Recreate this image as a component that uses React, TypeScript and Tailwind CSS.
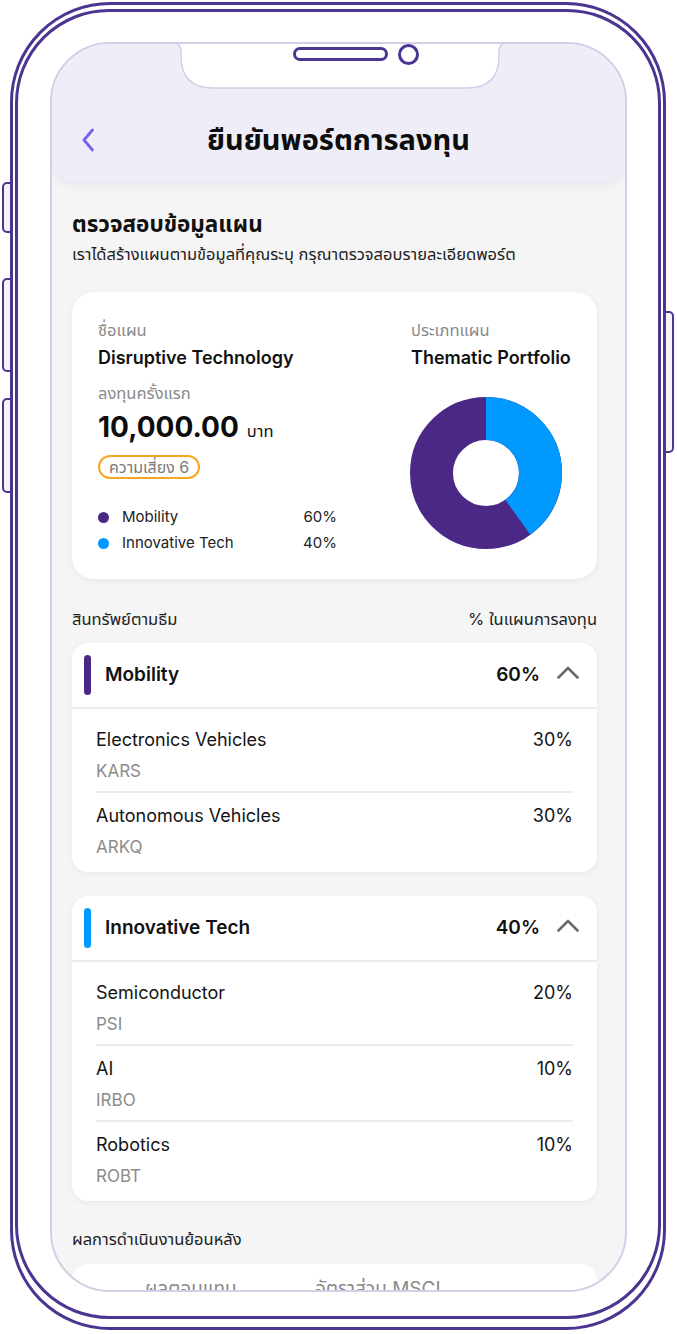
import React from "react";

const PURPLE = "#4b2886";

function Chevron() {
  return (
    <svg width="22" height="13" viewBox="0 0 22 13" fill="none">
      <polyline points="1.5,11.5 11,2 20.5,11.5" stroke="#6b6b6b" strokeWidth="2.6" strokeLinecap="round" strokeLinejoin="round" />
    </svg>
  );
}

function Item({ name, code, pct, last }: { name: string; code: string; pct: string; last?: boolean }) {
  return (
    <div className="px-[24px]">
      <div className={last ? "pt-[11px] pb-[8px]" : "pt-[11px] pb-[8px] border-b-2 border-[#ececec]"}>
        <div className="flex justify-between text-[18px] leading-[24px] text-[#141414]">
          <span>{name}</span>
          <span>{pct}</span>
        </div>
        <div className="mt-[7px] text-[17px] leading-[24px] text-[#8c8c8c]">{code}</div>
      </div>
    </div>
  );
}

function ThemeCard({
  title,
  pct,
  barClass,
  items,
}: {
  title: string;
  pct: string;
  barClass: string;
  items: { name: string; code: string; pct: string }[];
}) {
  return (
    <div className="bg-white rounded-[16px] shadow-[0_2px_6px_rgba(0,0,0,0.05)]">
      <div className="h-[66px] flex items-center pl-[12px] pr-[18px] border-b-2 border-[#ececec]">
        <div className={barClass} />
        <div className="ml-[14px] flex-1 text-[19px] font-semibold text-[#111]">{title}</div>
        <div className="text-[19px] font-semibold text-[#111]">{pct}</div>
        <div className="ml-[17px] -mt-[6px]">
          <Chevron />
        </div>
      </div>
      <div className="pt-[8px] pb-[5px]">
        {items.map((it, i) => (
          <Item key={it.code} {...it} last={i === items.length - 1} />
        ))}
      </div>
    </div>
  );
}

function Donut() {
  const r = 54.5;
  const c = 2 * Math.PI * r;
  return (
    <svg width="152" height="152" viewBox="0 0 152 152">
      <circle cx="76" cy="76" r={r} fill="none" stroke={PURPLE} strokeWidth="43" />
      <circle
        cx="76"
        cy="76"
        r={r}
        fill="none"
        stroke="#0099ff"
        strokeWidth="43"
        strokeDasharray={`${c * 0.4} ${c}`}
        transform="rotate(-90 76 76)"
      />
    </svg>
  );
}

export default function App() {
  return (
    <div className="w-[677px] h-[1334px] bg-white relative overflow-hidden font-[Inter,'Noto_Sans_Thai','Noto_Sans',sans-serif]">
      {/* side buttons */}
      <div className="absolute left-[2px] top-[182px] w-[10px] h-[51px] border-2 border-[#4c3491] rounded-l-[5px] bg-[#f6f4fb]" />
      <div className="absolute left-[2px] top-[278px] w-[10px] h-[94px] border-2 border-[#4c3491] rounded-l-[5px] bg-[#f6f4fb]" />
      <div className="absolute left-[2px] top-[398px] w-[10px] h-[95px] border-2 border-[#4c3491] rounded-l-[5px] bg-[#f6f4fb]" />
      <div className="absolute left-[664px] top-[311px] w-[10px] h-[142px] border-2 border-[#4c3491] rounded-r-[5px] bg-[#f6f4fb]" />

      <div className="pt-[2px] pl-[10px] relative">
        <div className="w-[656px] h-[1328px] rounded-[100px] border-[3px] border-[#4c3491] pt-[4px] pl-[2px] bg-white">
          <div className="w-[646px] h-[1310px] rounded-[94px] border-[3px] border-[#4c3491] pt-[30px] pl-[32px]">
            {/* screen */}
            <div className="w-[577px] h-[1250px] rounded-[60px] border-2 border-[#d4cfe6] overflow-hidden bg-[#f5f5f6] relative">
              {/* header */}
              <div className="h-[138px] bg-[#efedf7] rounded-b-[22px] shadow-[0_3px_8px_rgba(60,40,120,0.08)] relative">
                {/* notch */}
                <svg className="absolute left-[121px] -top-[2px]" width="334" height="48" viewBox="0 0 334 48">
                  <path
                    d="M0 0 Q 8 0 8 10 L 8 14 Q 8 46 40 46 L 294 46 Q 326 46 326 14 L 326 10 Q 326 0 334 0 Z"
                    fill="#ffffff"
                  />
                  <path
                    d="M0 1 Q 8 1 8 10 L 8 14 Q 8 46 40 46 L 294 46 Q 326 46 326 14 L 326 10 Q 326 1 334 1"
                    fill="none"
                    stroke="#d4cfe6"
                    strokeWidth="1.5"
                  />
                </svg>
                <div className="absolute left-[241px] top-[3px] w-[95px] h-[14px] rounded-full border-[3px] border-[#4c3491] bg-white" />
                <div className="absolute left-[346px] top-[0px] w-[21px] h-[21px] rounded-full border-[3px] border-[#4c3491] bg-white" />

                <div className="pt-[74px] grid grid-cols-[60px_1fr_60px] items-center h-[118px]">
                  <div className="pl-[29px]">
                    <svg width="14" height="24" viewBox="0 0 14 24" fill="none">
                      <polyline points="11.5,2 3,12 11.5,22" stroke="#7e5cf2" strokeWidth="2.8" strokeLinecap="round" strokeLinejoin="round" />
                    </svg>
                  </div>
                  <div className="text-center text-[29px] leading-[44px] font-bold text-[#0d0d0d]">ยืนยันพอร์ตการลงทุน</div>
                  <div />
                </div>
              </div>

              {/* content */}
              <div className="ml-[20px] w-[525px]">
                <div className="mt-[27px] text-[22.5px] leading-[30px] font-bold text-[#111]">ตรวจสอบข้อมูลแผน</div>
                <div className="mt-[4px] text-[16.5px] leading-[22px] text-[#222]">
                  เราได้สร้างแผนตามข้อมูลที่คุณระบุ กรุณาตรวจสอบรายละเอียดพอร์ต
                </div>

                {/* summary card */}
                <div className="mt-[27px] h-[287px] bg-white rounded-[22px] shadow-[0_2px_8px_rgba(0,0,0,0.05)] flex pt-[27px]">
                  <div className="pl-[26px] w-[339px]">
                    <div className="text-[16.5px] leading-[22px] text-[#8a8a8a]">ชื่อแผน</div>
                    <div className="mt-[4px] text-[18px] leading-[26px] font-semibold text-[#111]">Disruptive Technology</div>
                    <div className="mt-[11px] text-[16.5px] leading-[22px] text-[#8a8a8a]">ลงทุนครั้งแรก</div>
                    <div className="mt-[5px] flex items-baseline">
                      <span className="text-[28px] leading-[36px] font-bold text-[#0d0d0d]">10,000.00</span>
                      <span className="ml-[8px] text-[16.5px] text-[#111]">บาท</span>
                    </div>
                    <div className="mt-[10px] inline-flex items-center h-[24px] px-[9px] rounded-full border-2 border-[#f5a623] text-[16px] text-[#7a7a7a]">
                      ความเสี่ยง 6
                    </div>
                    <div className="mt-[27px] w-[239px] flex flex-col gap-[4px]">
                      <div className="flex items-center h-[22px] text-[15px] text-[#222]">
                        <span className="w-[11px] h-[11px] rounded-full bg-[#4b2886]" />
                        <span className="ml-[13px] flex-1">Mobility</span>
                        <span>60%</span>
                      </div>
                      <div className="flex items-center h-[22px] text-[15px] text-[#222]">
                        <span className="w-[11px] h-[11px] rounded-full bg-[#0099ff]" />
                        <span className="ml-[13px] flex-1">Innovative Tech</span>
                        <span>40%</span>
                      </div>
                    </div>
                  </div>
                  <div className="flex-1">
                    <div className="text-[16.5px] leading-[22px] text-[#8a8a8a]">ประเภทแผน</div>
                    <div className="mt-[4px] text-[18px] leading-[26px] font-semibold text-[#111]">Thematic Portfolio</div>
                    <div className="mt-[26px] -ml-[1px]">
                      <Donut />
                    </div>
                  </div>
                </div>

                <div className="mt-[29px] mb-[13px] flex justify-between text-[16.5px] leading-[22px] text-[#222]">
                  <span>สินทรัพย์ตามธีม</span>
                  <span>% ในแผนการลงทุน</span>
                </div>

                <ThemeCard
                  title="Mobility"
                  pct="60%"
                  barClass="w-[7px] h-[40px] rounded-full bg-[#4b2886]"
                  items={[
                    { name: "Electronics Vehicles", code: "KARS", pct: "30%" },
                    { name: "Autonomous Vehicles", code: "ARKQ", pct: "30%" },
                  ]}
                />
                <div className="h-[24px]" />
                <ThemeCard
                  title="Innovative Tech"
                  pct="40%"
                  barClass="w-[7px] h-[40px] rounded-full bg-[#0099ff]"
                  items={[
                    { name: "Semiconductor", code: "PSI", pct: "20%" },
                    { name: "AI", code: "IRBO", pct: "10%" },
                    { name: "Robotics", code: "ROBT", pct: "10%" },
                  ]}
                />

                <div className="mt-[27px] text-[16.5px] leading-[22px] text-[#222]">ผลการดำเนินงานย้อนหลัง</div>
                <div className="mt-[14px] h-[120px] bg-white rounded-[16px] pt-[12px] flex text-[19px] leading-[26px] text-[#8a8a8a]">
                  <span className="ml-[73px] w-[170px]">ผลตอบแทน</span>
                  <span>อัตราส่วน MSCI</span>
                </div>
              </div>
            </div>
          </div>
        </div>
      </div>
    </div>
  );
}
